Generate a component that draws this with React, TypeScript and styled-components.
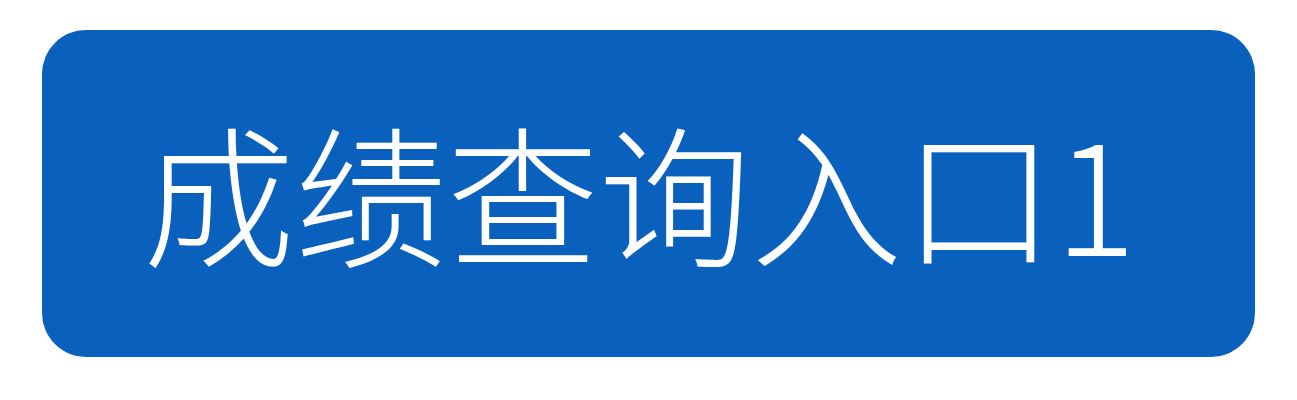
import React from "react";
import styled, { createGlobalStyle } from "styled-components";

const GlobalStyle = createGlobalStyle`
  html, body {
    margin: 0;
    padding: 0;
    background: #ffffff;
  }
`;

const Page = styled.div`
  display: flex;
  width: 1297px;
  height: 400px;
  padding: 30px 42px 43px 42px;
  box-sizing: border-box;
`;

const QueryButton = styled.button`
  display: flex;
  align-items: center;
  justify-content: center;

  width: 1213px;
  height: 327px;
  padding: 0 18px 8px 0;
  border: none;
  border-radius: 44px;
  background: #0a60bd;
  color: #ffffff;

  font-family: "Noto Sans CJK SC", "Liberation Sans", sans-serif;
  font-weight: 300;
  font-size: 152px;
  line-height: 1;
  cursor: pointer;
`;

const App = () => {
  return (
    <>
      <GlobalStyle />
      <Page>
        <QueryButton>成绩查询入口1</QueryButton>
      </Page>
    </>
  );
};

export default App;
